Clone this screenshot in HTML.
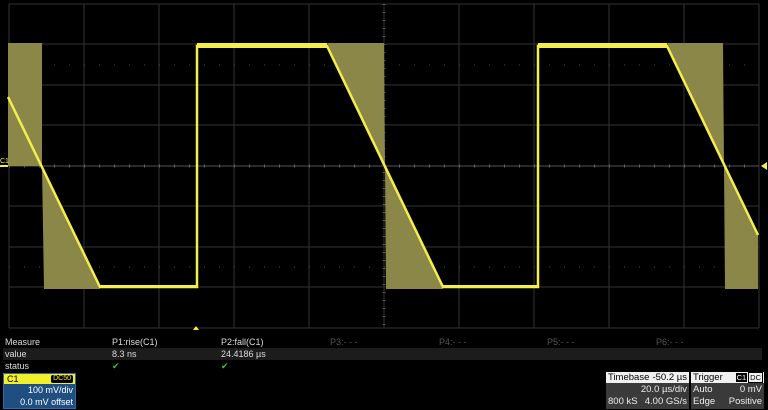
<!DOCTYPE html>
<html><head><meta charset="utf-8"><style>
*{margin:0;padding:0;box-sizing:border-box}
body{width:768px;height:410px;background:#000;overflow:hidden;position:relative;font-family:"Liberation Sans",sans-serif;font-size:9px;color:#ddd}
.t{position:absolute;white-space:nowrap;line-height:11px}
</style></head><body>
<svg width="768" height="330" style="position:absolute;left:0;top:0">
<g stroke="#333" stroke-width="1">
<line x1="9" y1="4" x2="9" y2="328"/><line x1="84" y1="4" x2="84" y2="328"/><line x1="159" y1="4" x2="159" y2="328"/><line x1="234" y1="4" x2="234" y2="328"/><line x1="309" y1="4" x2="309" y2="328"/><line x1="384" y1="4" x2="384" y2="328"/><line x1="459" y1="4" x2="459" y2="328"/><line x1="534" y1="4" x2="534" y2="328"/><line x1="609" y1="4" x2="609" y2="328"/><line x1="684" y1="4" x2="684" y2="328"/><line x1="759" y1="4" x2="759" y2="328"/>
<line x1="9" y1="4" x2="759" y2="4"/><line x1="9" y1="44" x2="759" y2="44"/><line x1="9" y1="85" x2="759" y2="85"/><line x1="9" y1="125" x2="759" y2="125"/><line x1="9" y1="166" x2="759" y2="166" stroke="#555"/><line x1="9" y1="206" x2="759" y2="206"/><line x1="9" y1="247" x2="759" y2="247"/><line x1="9" y1="287" x2="759" y2="287"/><line x1="9" y1="328" x2="759" y2="328"/>
</g>
<g stroke="#444" stroke-width="1" stroke-dasharray="1 14">
<line x1="9" y1="65" x2="759" y2="65"/><line x1="9" y1="267" x2="759" y2="267"/>
</g>
<line x1="9" y1="166" x2="759" y2="166" stroke="#666" stroke-dasharray="1 14" stroke-width="3"/>
<line x1="384" y1="4" x2="384" y2="328" stroke="#555" stroke-dasharray="1 7" stroke-width="3"/>
<g fill="#8b8748">
<rect x="8" y="43" width="34" height="123"/>
<polygon points="42,166 44,289 100,289"/>
<polygon points="327,43 384,43 385,166"/>
<polygon points="385,166 386,289 443,289"/>
<polygon points="667,43 723,43 724,166"/>
<polygon points="724,166 758,235 758,289 725,289"/>
</g>
<g stroke="#f4ee4a" fill="none" stroke-width="2.5">
<polyline points="8,97 100,287 197,287 197,46 327,46 443,287 538,287 538,46 667,46 758,235"/>
</g>
<rect x="197" y="43" width="130" height="5" fill="#f4ee4a"/>
<rect x="538" y="43" width="129" height="5" fill="#f4ee4a"/>
<rect x="100" y="285" width="97" height="3" fill="#f4ee4a"/>
<rect x="443" y="285" width="95" height="3" fill="#f4ee4a"/>
<line x1="0" y1="166" x2="8" y2="166" stroke="#f4ee4a" stroke-width="2"/>
<text x="0" y="163" fill="#f4ee4a" font-size="7" font-family="Liberation Sans">C1</text>
<polygon points="761,166 767,162 767,170" fill="#f4ee4a"/>
<polygon points="196,326 193,330 199,330" fill="#f4ee4a"/>
</svg>
<div style="position:absolute;left:3px;top:348px;width:759px;height:12px;background:#1c1c1c"></div>
<div class="t" style="left:5px;top:337px">Measure</div>
<div class="t" style="left:112px;top:337px">P1:rise(C1)</div>
<div class="t" style="left:221px;top:337px">P2:fall(C1)</div>
<div class="t" style="left:330px;top:337px;color:#555">P3:- - -</div>
<div class="t" style="left:439px;top:337px;color:#555">P4:- - -</div>
<div class="t" style="left:547px;top:337px;color:#555">P5:- - -</div>
<div class="t" style="left:656px;top:337px;color:#555">P6:- - -</div>
<div class="t" style="left:5px;top:349px">value</div>
<div class="t" style="left:112px;top:349px">8.3 ns</div>
<div class="t" style="left:221px;top:349px">24.4186 µs</div>
<div class="t" style="left:5px;top:361px">status</div>
<div class="t" style="left:112px;top:361px;color:#3c3">✔</div>
<div class="t" style="left:221px;top:361px;color:#3c3">✔</div>
<div style="position:absolute;left:3px;top:373px;width:73px;height:36px;background:#1f4f80;border:1px solid #2a6aaa">
<div style="height:10px;background:#f2ee2a;color:#000;font-size:9px;line-height:10px;padding-left:3px;position:relative">C1<span style="position:absolute;right:2px;top:1px;background:#000;color:#f2ee2a;font-size:7px;line-height:8px;padding:0 2px;border-radius:2px">DC50</span></div>
<div style="text-align:right;padding-right:2px;color:#fff;line-height:12px;font-size:9px">100 mV/div<br>0.0 mV offset</div>
</div>
<div style="position:absolute;left:606px;top:372px;width:83px;height:37px;background:#3a3a3a;color:#eee;font-size:9.5px">
<div style="height:11px;background:#f0f0f0;color:#000;line-height:11px;padding-left:2px">Timebase <span style="float:right;padding-right:2px">-50.2 µs</span></div>
<div style="text-align:right;padding-right:2px;line-height:13px">20.0 µs/div</div>
<div style="padding:0 2px;line-height:12px">800 kS<span style="float:right">4.00 GS/s</span></div>
</div>
<div style="position:absolute;left:691px;top:372px;width:73px;height:37px;background:#3a3a3a;color:#eee;font-size:9.5px">
<div style="height:11px;background:#f0f0f0;color:#000;line-height:11px;padding-left:2px;position:relative">Trigger<span style="position:absolute;right:1px;top:1px;font-size:7.5px;line-height:9px"><span style="background:#000;color:#fff;padding:0 1px">C1</span><span style="border:1px solid #000;padding:0 1px;margin-left:1px">DC</span></span></div>
<div style="padding:0 2px;line-height:13px">Auto<span style="float:right">0 mV</span></div>
<div style="padding:0 2px;line-height:12px">Edge<span style="float:right">Positive</span></div>
</div>
</body></html>
